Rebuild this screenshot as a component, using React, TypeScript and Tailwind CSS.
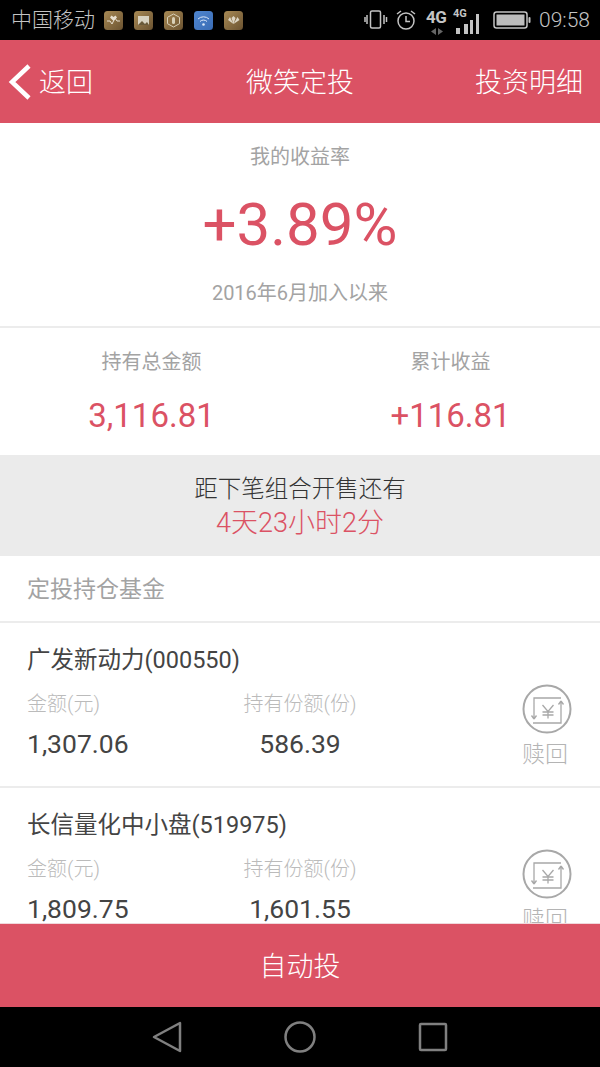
const funds = [
  { name: "广发新动力(000550)", amount: "1,307.06", shares: "586.39" },
  { name: "长信量化中小盘(519975)", amount: "1,809.75", shares: "1,601.55" },
];

const AppIcon = ({ id, from, to, children }: { id: string; from: string; to: string; children: React.ReactNode }) => (
  <svg width="19" height="19" viewBox="0 0 19 19">
    <defs>
      <linearGradient id={id} x1="0" y1="0" x2="1" y2="1">
        <stop offset="0" stopColor={from} />
        <stop offset="1" stopColor={to} />
      </linearGradient>
    </defs>
    <rect width="19" height="19" rx="3.5" fill={`url(#${id})`} />
    {children}
  </svg>
);

const RedeemIcon = () => (
  <svg width="50" height="50" viewBox="0 0 50 50" fill="none" stroke="#a8a8a8">
    <circle cx="25" cy="25" r="23.500" strokeWidth="2" />
    <path d="M39 14H12v21M12 35l-2.500-3.500M12 35l2.500-3.500M11 39h28V17M39 17l-2.500 3.500M39 17l2.500 3.500" strokeWidth="1.300" />
    <path d="M20.500 21l5.500 6.500 5.500-6.500M26 27.500V34.500M20.500 28h11M20.500 31h11" strokeWidth="1.300" />
  </svg>
);

const StatusIcons = () => (
  <div className="flex items-center text-[#c4c4c4]">
    <svg width="24" height="22" viewBox="0 0 24 22" fill="none" stroke="currentColor" strokeWidth="1.500">
      <rect x="6.500" y="2" width="10" height="17" rx="1.500" />
      <path d="M3 6v9M1 8v5M20 6v9M22.500 8v5" />
    </svg>
    <svg className="ml-[7px]" width="22" height="22" viewBox="0 0 22 22" fill="none" stroke="currentColor" strokeWidth="1.500">
      <circle cx="11" cy="12" r="8" />
      <path d="M11 7v5.500h4M2 5l4-3M20 5l-4-3" />
    </svg>
    <div className="relative ml-[9px] h-[30px] w-[22px]">
      <span className="absolute left-0 top-[3px] text-[17px] font-bold leading-[18px] tracking-[-0.5px]">4G</span>
      <svg className="absolute left-[4px] top-[23px]" width="14" height="7" viewBox="0 0 14 7" fill="#666">
        <path d="M6 0v7L1 3.500zM8 0v7l5-3.500z" />
      </svg>
    </div>
    <div className="relative ml-[5px] h-[30px] w-[27px]">
      <span className="absolute left-0 top-[3px] text-[11px] font-bold leading-[12px]">4G</span>
      <svg className="absolute left-0 top-[8px]" width="27" height="22" viewBox="0 0 27 22" fill="currentColor">
        <rect x="3" y="15" width="4" height="6" />
        <rect x="11" y="11" width="4" height="10" />
        <rect x="17" y="7" width="3" height="14" />
        <rect x="23" y="1" width="3" height="20" />
      </svg>
    </div>
    <svg className="ml-[13px]" width="38" height="20" viewBox="0 0 38 20">
      <rect x="1" y="2" width="33" height="16" rx="2.500" fill="none" stroke="currentColor" strokeWidth="1.500" />
      <rect x="3.500" y="4.500" width="28" height="11" fill="#bdbdbd" />
      <rect x="35.500" y="7" width="2" height="6" rx="1" fill="currentColor" />
    </svg>
    <span className="ml-[8px] text-[21px] font-light leading-none">09:58</span>
  </div>
);

export default function App() {
  return (
    <div className="flex h-[1067px] w-[600px] flex-col overflow-hidden bg-white font-['Roboto','Noto_Sans_CJK_SC',sans-serif]">
      {/* status bar */}
      <div className="flex h-10 shrink-0 items-center justify-between bg-black pl-[11px] pr-[10px]">
        <div className="flex items-center">
          <span className="text-[21px] font-light leading-none text-[#c4c4c4]">中国移动</span>
          <div className="ml-[9px] flex gap-[11px]">
            <AppIcon id="g1" from="#a88a55" to="#6a5230"><path d="M3 10h3l2 3 3-6 2 3h3" stroke="#e8e0d0" strokeWidth="1" fill="none" /><path d="M9.500 10L6 6.500 7.500 4.500 9.500 6 11.500 4.500 13 6.500z" fill="#e8e0d0" /></AppIcon>
            <AppIcon id="g2" from="#a88a55" to="#6a5230"><rect x="4" y="5" width="11" height="9" fill="#d8d2c0" /><path d="M4 14l4-4 3 3 2-2 2 3z" fill="#6a5a3a" /></AppIcon>
            <AppIcon id="g3" from="#a88a55" to="#6a5230"><path d="M9.500 3l6 3.300v6.400l-6 3.300-6-3.300V6.300z" fill="none" stroke="#d8d0b8" /><rect x="8" y="6" width="3" height="7" rx="1.500" fill="#d8d0b8" /></AppIcon>
            <AppIcon id="g4" from="#4f86d0" to="#3a6cb4"><path d="M4 8a8 8 0 0 1 11 0M6 10.500a5 5 0 0 1 7 0" stroke="#dce8f8" fill="none" /><circle cx="9.500" cy="13.500" r="1.300" fill="#dce8f8" /></AppIcon>
            <AppIcon id="g5" from="#a88a55" to="#6a5230"><path d="M9.500 13L6 6l-2 3 5.500 4zM9.500 13V5l-2 2zM9.500 13l4-7 2 3zM9.500 13V5l2 2z" fill="#ddd6c4" /></AppIcon>
          </div>
        </div>
        <StatusIcons />
      </div>

      {/* title bar */}
      <header className="relative flex h-[83px] shrink-0 items-center justify-between bg-[#db5264] pr-[17px] pt-[3px] text-white">
        <div className="flex items-center">
          <svg className="-mt-[3px] ml-[7px]" width="26" height="38" viewBox="0 0 26 38" fill="none" stroke="currentColor" strokeWidth="4.500">
            <path d="M22 3L5 19l17 16" />
          </svg>
          <span className="ml-[6px] text-[27px] font-light">返回</span>
        </div>
        <h1 className="absolute left-0 right-0 text-center text-[27px] font-light">微笑定投</h1>
        <span className="text-[27px] font-light">投资明细</span>
      </header>

      <main className="min-h-0 flex-1 overflow-hidden">
        {/* yield */}
        <section className="flex h-[205px] flex-col items-center border-b-2 border-[#ececec]">
          <p className="mt-[22px] text-[20px] leading-[24px] text-[#a3a3a3]">我的收益率</p>
          <p className="mt-[24px] text-[60px] font-normal leading-[64px] text-[#db5264]">+3.89%</p>
          <p className="mt-[24px] text-[20px] leading-[24px] text-[#a3a3a3]">2016年6月加入以来</p>
        </section>

        {/* totals */}
        <section className="flex h-[127px] pl-[2px]">
          <div className="flex flex-1 flex-col items-center">
            <p className="mt-[22px] text-[20px] leading-[24px] text-[#a3a3a3]">持有总金额</p>
            <p className="mt-[22px] text-[33px] font-normal leading-[40px] text-[#db5264]">3,116.81</p>
          </div>
          <div className="flex flex-1 flex-col items-center">
            <p className="mt-[22px] text-[20px] leading-[24px] text-[#a3a3a3]">累计收益</p>
            <p className="mt-[22px] text-[33px] font-normal leading-[40px] text-[#db5264]">+116.81</p>
          </div>
        </section>

        {/* countdown */}
        <section className="flex h-[101px] flex-col items-center justify-center bg-[#ebebeb]">
          <p className="text-[23.500px] font-light leading-[34px] text-[#333]">距下笔组合开售还有</p>
          <p className="text-[27px] font-light leading-[34px] text-[#db5264]">4天23小时2分</p>
        </section>

        <h2 className="flex h-[67px] items-center border-b-2 border-[#ececec] pt-[4px] pl-[27px] text-[23px] text-[#a3a3a3]">
          定投持仓基金
        </h2>

        {funds.map((fund) => (
          <div key={fund.name} className="relative h-[165px] border-b-2 border-[#ececec] pl-[27px] pt-[21px]">
            <p className="text-[23.500px] leading-[32px] text-[#444]">{fund.name}</p>
            <div className="mt-[16px] flex">
              <div className="w-[162px]">
                <p className="text-[20px] font-light leading-[24px] text-[#bbb]">金额(元)</p>
                <p className="mt-[12px] text-[26.500px] font-normal leading-[32px] text-[#444]">{fund.amount}</p>
              </div>
              <div className="w-[222px] text-center">
                <p className="text-[20px] font-light leading-[24px] text-[#bbb]">持有份额(份)</p>
                <p className="mt-[12px] text-[26.500px] font-normal leading-[32px] text-[#444]">{fund.shares}</p>
              </div>
            </div>
            <div className="absolute right-[28px] top-[61px] flex flex-col items-center">
              <RedeemIcon />
              <span className="mr-[4px] mt-[5px] whitespace-nowrap text-[23px] font-light leading-[32px] text-[#b4b4b4]">赎回</span>
            </div>
          </div>
        ))}
      </main>

      <button className="h-[84px] shrink-0 border-t border-[#f0d8dc] bg-[#db5264] pt-[4px] text-[27px] font-light text-white">自动投</button>

      {/* nav bar */}
      <nav className="flex h-[60px] shrink-0 items-center justify-center gap-[88px] bg-black">
        <svg width="45" height="32" viewBox="0 0 45 32" fill="none" stroke="#808080" strokeWidth="2.500" strokeLinejoin="round">
          <path d="M29 2v28L3 16z" />
        </svg>
        <svg width="32" height="32" viewBox="0 0 32 32" fill="none" stroke="#808080" strokeWidth="2.500">
          <circle cx="16" cy="16" r="14.500" />
        </svg>
        <svg width="45" height="32" viewBox="0 0 45 32" fill="none" stroke="#808080" strokeWidth="2.500" strokeLinejoin="round">
          <rect x="16" y="3" width="26" height="26" rx="1" />
        </svg>
      </nav>
    </div>
  );
}
